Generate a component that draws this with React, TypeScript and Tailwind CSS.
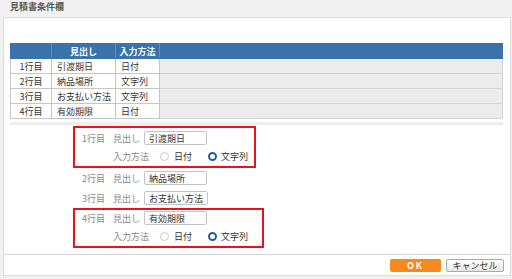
import React from "react";

const rows = [
  { n: "1行目", h: "引渡期日", m: "日付" },
  { n: "2行目", h: "納品場所", m: "文字列" },
  { n: "3行目", h: "お支払い方法", m: "文字列" },
  { n: "4行目", h: "有効期限", m: "日付" },
];

function Field({ num, value, w = "w-[63px]" }: { num: string; value: string; w?: string }) {
  return (
    <div className="flex items-center h-[14px] pl-[7px]">
      <span className="w-[31px] text-[#888] leading-none">{num}</span>
      <span className="w-[31px] text-[#888] leading-none">見出し</span>
      <div
        className={`${w} h-[14px] border border-[#c4c4c4] rounded-[2px] bg-white pl-[4px] flex items-center text-[#333] leading-none`}
      >
        {value}
      </div>
    </div>
  );
}

function RadioRow() {
  return (
    <div className="flex items-center h-[14px] pl-[38px] mt-[4px]">
      <span className="text-[#888] leading-none w-[47px]">入力方法</span>
      <span className="w-[9px] h-[9px] rounded-full border border-[#c8c8c8] bg-white"></span>
      <span className="ml-[5px] text-[#333] leading-none w-[34px]">日付</span>
      <span className="w-[9px] h-[9px] rounded-full border-[2.5px] border-[#1d5ea8] bg-white"></span>
      <span className="ml-[4px] text-[#333] leading-none">文字列</span>
    </div>
  );
}

export default function App() {
  return (
    <div className="w-[512px] h-[279px] bg-[#f1f1f1] overflow-hidden text-[9px] font-['Noto_Sans_CJK_JP',sans-serif]">
      <div className="h-[17px] pl-[10px] pt-[1px] text-[9px] font-bold text-[#5a5a5a] leading-[12px]">
        見積書条件欄
      </div>
      <div className="ml-[3px] w-[508px] h-[259px] bg-white border border-[#dcdcdc] flex flex-col">
        <div className="flex-1">
          <div className="pt-[25px] pl-[6px]">
            <table className="w-[493px] border-collapse table-fixed">
              <colgroup>
                <col className="w-[41px]" />
                <col className="w-[64px]" />
                <col className="w-[44px]" />
                <col />
              </colgroup>
              <thead>
                <tr className="h-[15px] bg-[#3a72ab] text-white font-bold">
                  <th className="border border-[#3a72ab] border-r-[#5f8fc0] p-0"></th>
                  <th className="border border-[#3a72ab] border-r-[#5f8fc0] p-0 text-center font-bold leading-none">見出し</th>
                  <th className="border border-[#3a72ab] border-r-[#5f8fc0] p-0 text-center font-bold leading-none">入力方法</th>
                  <th className="border border-[#3a72ab] p-0"></th>
                </tr>
              </thead>
              <tbody>
                {rows.map((r) => (
                  <tr key={r.n} className="h-[15px] text-[#333]">
                    <td className="border border-[#c6c6c6] bg-white p-0 text-center leading-none">{r.n}</td>
                    <td className="border border-[#c6c6c6] bg-white p-0 pl-[5px] leading-none whitespace-nowrap">{r.h}</td>
                    <td className="border border-[#c6c6c6] bg-white p-0 pl-[5px] leading-none whitespace-nowrap">{r.m}</td>
                    <td className="border border-[#d4d4d4] bg-[#ececec] p-0"></td>
                  </tr>
                ))}
              </tbody>
            </table>
            <div className="w-[493px] h-[3px] mt-[3px] bg-[#eeeeee]"></div>
          </div>

          <div className="ml-[69px] mt-[1px] w-[183px] border-2 border-[#e8121c] pt-[3px] pb-[3px]">
            <Field num="1行目" value="引渡期日" />
            <RadioRow />
          </div>
          <div className="ml-[71px] mt-[3px]">
            <Field num="2行目" value="納品場所" />
          </div>
          <div className="ml-[71px] mt-[6px]">
            <Field num="3行目" value="お支払い方法" w="w-[64px]" />
          </div>
          <div className="ml-[69px] mt-[3px] w-[191px] border-2 border-[#e8121c] pt-[1px] pb-[3px]">
            <Field num="4行目" value="有効期限" />
            <RadioRow />
          </div>
        </div>
        <div className="h-[21px] border-t border-[#d6d6d6] flex justify-end items-start pt-[4px] pr-[6px] gap-[5px]">
          <div className="w-[51px] h-[13px] bg-[#f7891e] rounded-[2px] text-white font-bold text-[9px] tracking-[2px] flex items-center justify-center leading-none">
            OK
          </div>
          <div className="w-[58px] h-[13px] border border-[#a9a9a9] rounded-[2px] bg-gradient-to-b from-white to-[#e6e6e6] text-[#333] text-[9px] flex items-center justify-center leading-none">
            キャンセル
          </div>
        </div>
      </div>
    </div>
  );
}
